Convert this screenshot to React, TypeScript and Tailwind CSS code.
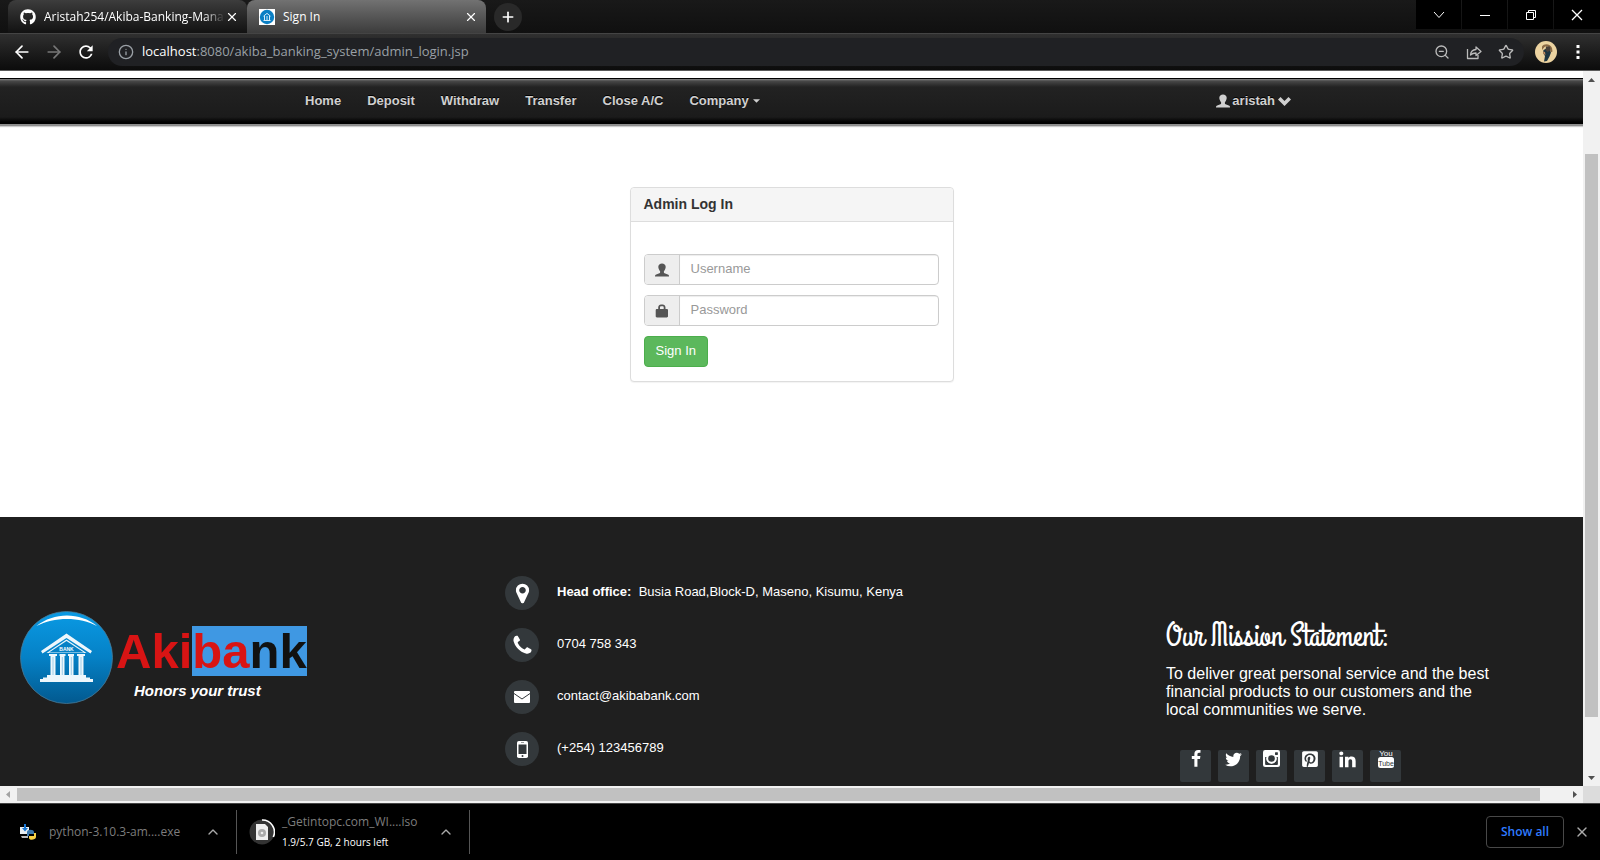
import React from "react";
import { ArrowLeft, ArrowRight, ChevronUp, Info, Plus, Star, X, ZoomOut } from "lucide-react";
import { FaGithub, FaPinterestSquare } from "react-icons/fa";
import { MdRefresh } from "react-icons/md";

const UI = "font-['Segoe_UI','Open_Sans',sans-serif]";
const ARIAL = "font-['Liberation_Sans',Arial,sans-serif]";

function Glyph({ d, className }: { d: string; className: string }) {
  return (
    <svg viewBox="0 0 1792 1792" className={className} fill="currentColor" aria-hidden="true">
      <path d={d} />
    </svg>
  );
}

const MARKER =
  "M1152 640q0-106-75-181t-181-75-181 75-75 181 75 181 181 75 181-75 75-181zm256 0q0 109-33 179l-364 774q-16 33-47.5 52t-67.5 19-67.5-19-46.5-52l-365-774q-33-70-33-179 0-212 150-362t362-150 362 150 150 362z";
const PHONE =
  "M1600 1240q0 27-10 70.5t-21 68.5q-21 50-122 106-94 51-186 51-27 0-53-3.5t-57.5-12.5-47-14.5-55.5-20.5-49-18q-98-35-175-83-127-79-264-216t-216-264q-48-77-83-175-3-9-18-49t-20.5-55.5-14.5-47-12.5-57.5-3.5-53q0-92 51-186 56-101 106-122 25-11 68.5-21t70.5-10q14 0 21 3 18 6 53 76 11 19 30 54t35 63.5 31 53.5q3 4 17.5 25t21.5 35.5 7 28.5q0 20-28.5 50t-62 55-62 53-28.5 46q0 9 5 22.5t8.5 20.5 14 24 11.5 19q76 137 174 235t235 174q2 1 19 11.5t24 14 20.5 8.5 22.5 5q18 0 46-28.5t53-62 55-62 50-28.5q14 0 28.5 7t35.5 21.5 25 17.5q25 15 53.5 31t63.5 35 54 30q70 35 76 53 3 7 3 21z";
const FACEBOOK =
  "M1343 12v264h-157q-86 0-116 36t-30 108v189h293l-39 296h-254v759h-306v-759h-255v-296h255v-218q0-186 104-288.5t277-102.5q147 0 228 12z";
const TWITTER =
  "M1684 408q-67 98-162 167 1 14 1 42 0 130-38 259.5t-115.5 248.5-184.5 210.5-258 146-323 54.5q-271 0-496-145 35 4 78 4 225 0 401-138-105-2-188-64.5t-114-159.5q33 5 61 5 43 0 85-11-112-23-185.5-111.5t-73.5-205.5v-4q68 38 146 41-66-44-105-115t-39-154q0-88 44-163 121 149 294.5 238.5t371.5 99.5q-8-38-8-74 0-134 94.5-228.5t228.5-94.5q140 0 236 102 109-21 205-78-37 115-142 178 93-10 186-50z";
const LINKEDIN =
  "M477 625v991h-330v-991h330zm21-306q1 73-50.5 122t-135.5 49h-2q-82 0-132-49t-50-122q0-74 51.5-122.5t134.5-48.5 133 48.5 51 122.5zm1166 729v568h-329v-530q0-105-40.5-164.5t-126.5-59.5q-63 0-105.5 34.5t-63.5 85.5q-11 30-11 81v553h-329q2-399 2-647t-1-296l-1-48h329v144h-2q20-32 41-56t56.5-52 87-43.5 114.5-15.5q171 0 275 113.5t104 332.5z";

function UserGlyph() {
  return (
    <svg viewBox="0 0 14 14" className="size-[14px]" fill="currentColor" aria-hidden="true">
      <path d="M7 .4C4.900.4 3.300 1.700 3.300 3.700c0 1 .2 1.600.5 2.400.3.900.7 1.600 1.300 2.200v1.200c0 .4-.3.600-.7.800L1.200 11.600C.5 11.900 0 12.400 0 13.100V13.600H14V13.100c0-.7-.5-1.200-1.200-1.500L9.600 10.300c-.4-.2-.7-.4-.7-.8V8.300c.6-.6 1-1.300 1.300-2.200.3-.8.5-1.400.5-2.400C10.700 1.700 9.100.4 7 .4z" />
    </svg>
  );
}

function LockGlyph() {
  return (
    <svg viewBox="0 0 14 14" className="size-[14px]" fill="currentColor" aria-hidden="true">
      <path
        fillRule="evenodd"
        d="M3.200 5V3.500C3.200 1.500 4.600.5 6 .5h1.600c1.500 0 2.900 1 2.900 3V5h1.300c.7 0 1.200.5 1.200 1.200v6.100c0 .7-.5 1.200-1.200 1.200H1.900c-.7 0-1.200-.5-1.200-1.200V6.200C.7 5.500 1.200 5 1.900 5zM5 5h3.700V3.600c0-.8-.5-1.300-1.100-1.300H6.100C5.500 2.300 5 2.800 5 3.600z"
      />
    </svg>
  );
}

function BankFavicon() {
  return (
    <svg viewBox="0 0 16 16" className="size-4 shrink-0" aria-hidden="true">
      <rect width="16" height="16" fill="#fff" />
      <circle cx="8" cy="8" r="7.200" fill="#0b7fc4" />
      <path d="M4.500 7.200 8 4.400l3.500 2.800M5.500 7v4M8 7v4M10.500 7v4M4.500 11.500h7" stroke="#d6edfa" strokeWidth="1" fill="none" />
    </svg>
  );
}

function BankLogo() {
  return (
    <svg viewBox="0 0 93 93" className="size-[93px] shrink-0" role="img" aria-label="Bank">
      <defs>
        <linearGradient id="disc" x1="0" y1="0" x2="0" y2="1">
          <stop offset="0" stopColor="#0a9ae4" />
          <stop offset="0.500" stopColor="#0581c6" />
          <stop offset="1" stopColor="#02598f" />
        </linearGradient>
      </defs>
      <circle cx="46.500" cy="46.500" r="46" fill="url(#disc)" stroke="#4a7893" strokeWidth="0.800" />
      <path d="M16.500 15C34 1 60 1 77 15 60 5.500 34 5.500 16.500 15z" fill="#fff" />
      <g fill="#eef7fc">
        <path d="M46.500 22.500 72 40l-1.500 2.500L46.500 27 22.500 42.500 21 40z" />
        <path d="M46.500 28.500 66.500 42H26.500z" />
        <path d="M29 43h8v2h-8zM39.500 43h6v2h-6zM48 43h6v2h-6zM57 43h8v2h-8z" />
        <path d="M30.500 45h5v19h-5zM40 45h4.500v19H40zM49 45h4.500v19H49zM58.500 45h5v19h-5z" />
        <path d="M27 64h39v2.500H27zM23 66.500h47v1.500h3V71H20v-3h3z" />
      </g>
      <path d="M46.500 30 64 41.500H29z" fill="#0581c6" />
      <path d="M33 46v18M42.300 46v18M51.300 46v18M61 46v18" stroke="#7dbce0" strokeWidth="0.700" />
      <text x="46.500" y="40" textAnchor="middle" fontSize="5" fontWeight="bold" fill="#fff" fontFamily="Liberation Sans, sans-serif">
        BANK
      </text>
    </svg>
  );
}

function TabStrip() {
  return (
    <div className="flex h-[33px] bg-linear-to-b from-[#191919] to-[#101010]">
      <div className="flex min-w-0 flex-1 pl-2">
        <div className="flex w-[239px] items-center rounded-t-lg bg-linear-to-b from-[#3d3d3d] to-[#121212] pr-2 pl-3 text-white">
          <FaGithub className="size-4 shrink-0" />
          <span className="ml-2 flex-1 mask-r-from-88% whitespace-nowrap text-[12px]">Aristah254/Akiba-Banking-Mana</span>
          <button aria-label="Close tab">
            <X className="size-[14px]" />
          </button>
        </div>
        <div className="flex w-[239px] items-center rounded-t-lg bg-linear-to-b from-[#727272] to-[#3c3c3c] pr-2 pl-3 text-white">
          <BankFavicon />
          <span className="ml-2 flex-1 text-[12px]">Sign In</span>
          <button aria-label="Close tab">
            <X className="size-[14px]" />
          </button>
        </div>
        <button aria-label="New tab" className="mt-[3px] ml-2 grid size-[28px] place-items-center rounded-full bg-[#292929] text-white">
          <Plus className="size-4" strokeWidth={2.5} />
        </button>
      </div>
      <div className="flex h-[29px] gap-px">
        <button aria-label="Search tabs" className="grid w-[45px] place-items-center bg-black text-white">
          <svg viewBox="0 0 12 8" className="h-2 w-3" fill="none" stroke="currentColor"><path d="M1 1l5 5.500L11 1" /></svg>
        </button>
        <button aria-label="Minimize" className="grid w-[45px] place-items-center bg-black text-white">
          <svg viewBox="0 0 10 10" className="size-[10px]" fill="currentColor"><path d="M0 5h10v1H0z" /></svg>
        </button>
        <button aria-label="Restore" className="grid w-[45px] place-items-center bg-black text-white">
          <svg viewBox="0 0 10 10" className="size-[10px]" fill="none" stroke="currentColor"><path d="M.5 2.500h7v7h-7zM2.500 2V.5h7v7H8" /></svg>
        </button>
        <button aria-label="Close" className="grid w-[46px] place-items-center bg-black text-white">
          <svg viewBox="0 0 12 12" className="size-[12px]" fill="none" stroke="currentColor" strokeWidth="1.300"><path d="M1 1l10 10M11 1 1 11" /></svg>
        </button>
      </div>
    </div>
  );
}

function Toolbar() {
  return (
    <div className="flex h-[38px] items-center border-t border-b border-t-[#444] border-b-[#5a5a5a] bg-linear-to-b from-[#303030] via-[#141414] via-75% to-[#0c0c0c] px-3 text-white">
      <button aria-label="Back" className="mr-3"><ArrowLeft className="size-5" /></button>
      <button aria-label="Forward" className="mr-3 text-[#777]"><ArrowRight className="size-5" /></button>
      <button aria-label="Reload" className="mr-3"><MdRefresh className="size-5" /></button>
      <div className="flex h-[28px] min-w-0 flex-1 items-center rounded-full bg-[#202124] pr-2.5 pl-2.5 text-[#9aa0a6]">
        <Info className="mr-2 size-4 shrink-0" strokeWidth={2} />
        <span className="flex-1 text-[13px]">
          <span className="text-white">localhost</span>:8080/akiba_banking_system/admin_login.jsp
        </span>
        <button aria-label="Zoom" className="mr-4 text-[#bbb]"><ZoomOut className="size-4" /></button>
        <button aria-label="Share" className="mr-4 text-[#bbb]">
          <svg viewBox="0 0 16 16" className="size-4" fill="none" stroke="currentColor" strokeWidth="1.300">
            <path d="M1.500 5v9.500H12V11M4.500 11c.3-3.500 2-5.300 5.500-5.500V3l5 4.500-5 4V9c-2.500 0-4 .5-5.500 2z" strokeLinejoin="round" />
          </svg>
        </button>
        <button aria-label="Bookmark" className="text-[#bbb]"><Star className="size-4" /></button>
      </div>
      <svg viewBox="0 0 22 22" className="mx-[11px] size-[22px]" role="img" aria-label="Profile">
        <circle cx="11" cy="11" r="11" fill="#ecd3a0" />
        <path d="M8.500 9l3-1.500L15 9l1 2.500-1.500 4-2.500 4.500-3 .5L10 15l-2-3z" fill="#1d3440" />
        <path d="M7 5.500C9 2 15.500 2.500 17 7l.5 3.500-2 1C16 7 13 4.500 9.500 6L7 9z" fill="#8b6a45" />
        <path d="M11 5.500h4l.5 4-3 1.500-2-2z" fill="#4a4038" />
        <path d="M8 10.500l2 .5.500 3-2-1z" fill="#c08a5e" />
      </svg>
      <button aria-label="Menu" className="grid w-5 place-items-center">
        <svg viewBox="0 0 4 14" className="h-[14px] w-1" fill="currentColor"><path d="M.5 0h3v3h-3zM.5 5.500h3v3h-3zM.5 11h3v3h-3z" /></svg>
      </button>
    </div>
  );
}

function NavBar() {
  const links = ["Home", "Deposit", "Withdraw", "Transfer", "Close A/C"];
  return (
    <nav className="mt-[7px] h-[48px] border-t border-b-2 border-t-black border-b-[#8d8d8d] bg-[linear-gradient(#888_0px,#484848_2px,#222_8px,#1b1b1b_38px,#000_43px)] shadow-[0_1px_1px_#ccc]">
      <div className="mx-auto flex h-[44px] max-w-[999px] items-center justify-between text-[13px] font-bold text-[#d0d0d0] text-shadow-[0_-1px_0_#000]">
        <div className="flex items-center">
          {links.map((l) => (
            <a key={l} href="#" className="px-[13px]">{l}</a>
          ))}
          <a href="#" className="flex items-center px-[13px]">
            Company
            <svg viewBox="0 0 8 4" className="ml-1 h-1 w-[7px]" fill="currentColor"><path d="M0 0h8L4 4z" /></svg>
          </a>
        </div>
        <a href="#" className="flex items-center">
          <UserGlyph />
          <span className="mr-[3px] ml-0.5">aristah</span>
          <svg viewBox="0 0 13 9" className="h-[9px] w-[13px]" fill="currentColor"><path d="M2.500 0l4 4 4-4L13 2.500 6.500 9 0 2.500z" /></svg>
        </a>
      </div>
    </nav>
  );
}

function Field({ id, type, label, icon }: { id: string; type: string; label: string; icon: React.ReactNode }) {
  return (
    <div className="flex h-[31px] overflow-hidden rounded border border-[#ccc]">
      <label htmlFor={id} aria-label={label} className="grid w-[35px] place-items-center border-r border-[#ccc] bg-[#eee] text-[#555]">
        {icon}
      </label>
      <input id={id} type={type} placeholder={label} className="min-w-0 flex-1 px-[11px] pb-0.5 text-[13px] shadow-[inset_0_1px_1px_rgba(0,0,0,0.075)] outline-none placeholder:text-[#999]" />
    </div>
  );
}

function LoginPanel() {
  return (
    <form className="mx-auto w-[324px] rounded border border-[#ddd] bg-white shadow-[0_1px_1px_rgba(0,0,0,0.05)]" onSubmit={(e) => e.preventDefault()}>
      <h1 className="flex h-[34px] items-center rounded-t border-b border-[#ddd] bg-[#f5f5f5] px-[13px] text-[14px] font-bold text-[#333]">Admin Log In</h1>
      <div className="flex flex-col items-start gap-2.5 pt-8 pr-[14px] pb-[14px] pl-[13px]">
        <div className="w-full"><Field id="username" type="text" label="Username" icon={<UserGlyph />} /></div>
        <div className="w-full"><Field id="password" type="password" label="Password" icon={<LockGlyph />} /></div>
        <button type="submit" className="h-[31px] rounded border border-[#4cae4c] bg-[#5cb85c] px-[11px] pb-0.5 text-[13px] text-white">Sign In</button>
      </div>
    </form>
  );
}

function Contact({ icon, children }: { icon: React.ReactNode; children: React.ReactNode }) {
  return (
    <li className="flex items-center gap-[18px]">
      <span className="grid size-[34px] place-items-center rounded-full bg-[#33383b] text-white">{icon}</span>
      <span className="pb-0.5">{children}</span>
    </li>
  );
}

function Footer() {
  const social = [
    { name: "Facebook", icon: <Glyph d={FACEBOOK} className="size-[18px]" /> },
    { name: "Twitter", icon: <Glyph d={TWITTER} className="size-[19px]" /> },
    {
      name: "Instagram",
      icon: (
        <svg viewBox="0 0 16 16" className="size-[17px]" aria-hidden="true">
          <rect width="16" height="16" rx="2" fill="#fff" />
          <path d="M2 6.500h1.500v0A4.800 4.800 0 1 0 12.500 6.500H14v6.700a.8.800 0 0 1-.8.800H2.800a.8.800 0 0 1-.8-.8z" fill="#33383b" />
          <circle cx="8" cy="8" r="4.800" fill="#fff" />
          <circle cx="8" cy="8" r="3.100" fill="#33383b" />
          <rect x="11.300" y="2" width="2.700" height="2.600" rx=".5" fill="#33383b" />
        </svg>
      ),
    },
    { name: "Pinterest", icon: <FaPinterestSquare className="size-[18px]" /> },
    { name: "LinkedIn", icon: <Glyph d={LINKEDIN} className="size-[19px]" /> },
    {
      name: "YouTube",
      icon: (
        <svg viewBox="0 0 16 19" className="h-[19px] w-4 overflow-visible" aria-hidden="true">
          <text x="8" y="6" textAnchor="middle" fontSize="8" fill="#fff" fontFamily="Liberation Sans Narrow, Liberation Sans, sans-serif">You</text>
          <rect y="7" width="16" height="11" rx="2.500" fill="#fff" />
          <text x="8" y="15.500" textAnchor="middle" fontSize="7" fill="#33383b" fontFamily="Liberation Sans Narrow, Liberation Sans, sans-serif">Tube</text>
        </svg>
      ),
    },
  ];
  return (
    <footer className="grid h-[269px] grid-cols-[505fr_661fr_417fr] overflow-hidden bg-[#1f1f1f] text-white">
      <div className="flex gap-[3px] pt-[94px] pl-5">
        <BankLogo />
        <div className="pt-[15px]">
          <div className="text-[49px] leading-[50px] font-bold text-[#d81414]">
            Aki<span className="inline-block bg-[#3f98e3]">ba<span className="text-[#111]">nk</span></span>
          </div>
          <p className="mt-1 ml-[18px] text-[15px] font-bold italic">Honors your trust</p>
        </div>
      </div>
      <ul className="flex flex-col gap-[18px] pt-[59px] text-[13px]">
        <Contact icon={<Glyph d={MARKER} className="size-[23px]" />}>
          <b>Head office:</b>&nbsp; Busia Road,Block-D, Maseno, Kisumu, Kenya
        </Contact>
        <Contact icon={<Glyph d={PHONE} className="size-[23px]" />}>0704 758 343</Contact>
        <Contact
          icon={
            <svg viewBox="0 0 16 12" className="h-3 w-4"><rect width="16" height="12" rx="1" fill="#fff" /><path d="M0 2.500 8 8l8-5.500" fill="none" stroke="#33383b" /></svg>
          }
        >
          contact@akibabank.com
        </Contact>
        <Contact
          icon={
            <svg viewBox="0 0 11 17" className="h-[17px] w-[11px]"><rect width="11" height="17" rx="1.800" fill="#fff" /><path d="M1.500 3.500h8v9.500h-8zM4 1.500h3v.6H4z" fill="#33383b" /><circle cx="5.500" cy="15" r="1" fill="#33383b" /></svg>
          }
        >
          (+254) 123456789
        </Contact>
      </ul>
      <div className="pt-[104px]">
        <h2 className="font-['Grand_Hotel',cursive] text-[32px] leading-8 whitespace-nowrap">Our Mission Statement:</h2>
        <p className="mt-3 max-w-[340px] text-[16px] leading-[18px]">To deliver great personal service and the best financial products to our customers and the local communities we serve.</p>
        <div className="mt-[31px] ml-[14px] flex gap-[7px]">
          {social.map((s) => (
            <a key={s.name} href="#" aria-label={s.name} className="flex h-8 w-[31px] justify-center rounded-xs bg-[#33383b]">
              {s.icon}
            </a>
          ))}
        </div>
      </div>
    </footer>
  );
}

function DownloadBar() {
  return (
    <div className={`${UI} flex h-[57px] items-center border-t border-[#444] bg-black text-[#7d7d7d]`}>
      <div className="flex h-11 w-[237px] items-center border-r border-[#555] pr-[15px] pl-5">
        <svg viewBox="0 0 16 16" className="size-4 shrink-0" aria-hidden="true">
          <path d="M0 3h9v7H0z" fill="#e8eef2" /><path d="M1 12h7v2H2z" fill="#bbb" />
          <path d="M4 0h2v4h2L5 7.500 2 4h2z" fill="#1976d2" />
          <path d="M7 8c0-3 7-3 7 0v2H9v2H7z" fill="#3b78ad" /><path d="M16 9v4c0 3-7 4-7 1v-2h5V9z" fill="#f7d245" />
        </svg>
        <span className="ml-[13px] flex-1 text-[12px] whitespace-nowrap">python-3.10.3-am....exe</span>
        <button aria-label="Download options" className="text-[#aaa]"><ChevronUp className="size-4" /></button>
      </div>
      <div className="flex h-11 w-[233px] items-center border-r border-[#555] pr-[15px] pl-3">
        <svg viewBox="0 0 26 26" className="size-[26px] shrink-0" aria-hidden="true">
          <circle cx="13" cy="13" r="12.500" fill="#333" />
          <path d="M13 1a12 12 0 0 1 11.300 17" fill="none" stroke="#fff" strokeWidth="1.600" />
          <path d="M7 5h9l3 3v13H7z" fill="#eee" /><circle cx="13" cy="14" r="4" fill="#aaa" /><circle cx="13" cy="14" r="1.300" fill="#eee" />
        </svg>
        <div className="ml-[7px] flex-1 whitespace-nowrap">
          <p className="text-[12px] leading-5">_Getintopc.com_WI....iso</p>
          <p className="text-[10px] leading-5 text-white">1.9/5.7 GB, 2 hours left</p>
        </div>
        <button aria-label="Download options" className="text-[#aaa]"><ChevronUp className="size-4" /></button>
      </div>
      <div className="flex-1" />
      <button className="h-8 w-[78px] rounded border border-[#484848] text-[12px] font-semibold text-[#2f7bff]">Show all</button>
      <button aria-label="Close downloads" className="mr-[10px] ml-[10px] text-[#aaa]"><X className="size-4" /></button>
    </div>
  );
}

export default function App() {
  return (
    <div className="flex min-h-screen flex-col bg-white">
      <header className={UI}>
        <TabStrip />
        <Toolbar />
      </header>
      <div className={`${ARIAL} flex flex-1`}>
        <div className="flex min-w-0 flex-1 flex-col">
          <NavBar />
          <main className="flex-1 pt-[61px] pb-12"><LoginPanel /></main>
          <Footer />
        </div>
        <div className="flex w-[17px] flex-col items-center bg-[#f1f1f1]">
          <svg viewBox="0 0 17 17" className="size-[17px]" fill="#505050"><path d="M5 11h7L8.500 7z" /></svg>
          <div className="grow-66" />
          <div className="w-[13px] grow-563 bg-[#c1c1c1]" />
          <div className="grow-52" />
          <svg viewBox="0 0 17 17" className="size-[17px]" fill="#505050"><path d="M5 7h7l-3.500 4z" /></svg>
        </div>
      </div>
      <div className="flex h-[17px] items-center bg-[#f1f1f1]">
        <svg viewBox="0 0 17 17" className="size-[17px]" fill="#a3a3a3"><path d="M10 5v7L6 8.500z" /></svg>
        <div className="h-[13px] grow-1523 bg-[#c1c1c1]" />
        <div className="grow-26" />
        <svg viewBox="0 0 17 17" className="size-[17px]" fill="#505050"><path d="M7 5v7l4-3.500z" /></svg>
        <div className="size-[17px] bg-[#dcdcdc]" />
      </div>
      <DownloadBar />
    </div>
  );
}
